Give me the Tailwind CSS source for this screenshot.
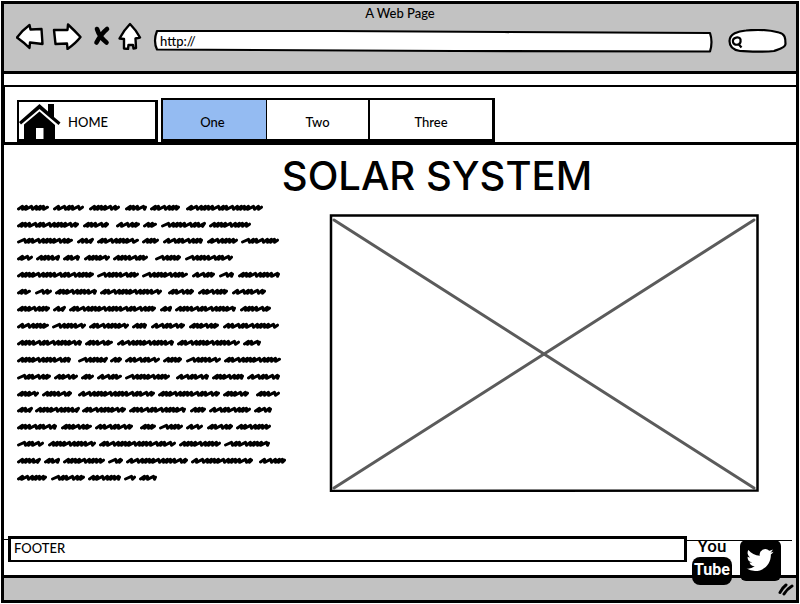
<!DOCTYPE html>
<html lang="en">
<head>
<meta charset="utf-8">
<title>A Web Page</title>
<script src="https://cdn.jsdelivr.net/npm/@tailwindcss/browser@4"></script>
</head>
<body class="bg-white font-['Lato',sans-serif] text-[13px] leading-4 font-medium text-black">
<div class="flex min-h-screen flex-col p-px">
  <div class="flex flex-1 flex-col border-3 border-black">

    <header class="border-b-3 border-black bg-[#c2c2c2] pb-[18px]">
      <p class="pt-px text-center">A Web Page</p>
      <div class="flex items-start pt-px pr-[9px] pl-3">
        <button type="button" aria-label="Back" class="shrink-0">
          <svg width="28" height="28" viewBox="0 0 28 28" fill="#fff" stroke="#000" stroke-width="2.400" stroke-linejoin="round"><path d="M1 15.500 Q6 8.500 13.500 3 L14.500 7.500 L25.500 7 L26.500 22 L14 20.500 L13.500 26 Q8 20.500 1 15.500Z"/></svg>
        </button>
        <button type="button" aria-label="Forward" class="ml-2 shrink-0">
          <svg width="30" height="28" viewBox="0 0 30 28" fill="#fff" stroke="#000" stroke-width="2.400" stroke-linejoin="round"><path d="M2 8 L15.500 8 L16 2.500 Q23 9 28.500 15 Q24 21 15.500 27 L15 21.500 L3.500 22Z"/></svg>
        </button>
        <button type="button" aria-label="Stop" class="ml-2 shrink-0">
          <svg width="22" height="28" viewBox="0 0 22 28" fill="none" stroke="#000" stroke-width="4.600" stroke-linecap="round"><path d="M7 7 Q9.500 15 16.500 20.500 M17 7 Q11 12 6.500 20.500"/></svg>
        </button>
        <button type="button" aria-label="Home" class="ml-[5px] shrink-0">
          <svg width="26" height="28" viewBox="0 0 26 28" fill="#fff" stroke="#000" stroke-width="2.400" stroke-linejoin="round"><path d="M13 2 Q19 8 23 15.500 L18.500 16.500 L19 26 L16.500 26.500 L16 23 L11.500 23 L11 27 L7 26.500 L7 17 L2.500 16.500 Q7 8 13 2Z"/></svg>
        </button>
        <div class="relative mt-[9px] ml-[11px] h-[22px] flex-1">
          <svg class="absolute inset-0 h-full w-full overflow-visible" viewBox="0 0 558 22" preserveAspectRatio="none" fill="#fff" stroke="#000" stroke-width="2.200" stroke-linejoin="round"><path d="M3 0 L180 0 L350 1 L556 2 Q559 11 556 20.500 L300 20 L3 18.500 Q-1 10 3 0Z"/></svg>
          <input type="text" aria-label="Address" value="http://" class="relative block h-5 w-full bg-transparent pl-1.5 outline-none">
        </div>
        <div class="relative mt-[7px] ml-4 h-[24px] w-[59px] shrink-0">
          <svg class="absolute inset-0" width="59" height="24" viewBox="0 0 59 24" fill="#fff" stroke="#000" stroke-width="2.200"><path d="M1.500 12 C1.500 5 10 2 18 1.500 C28 0.500 42 1 51 3.500 C57 5 57.500 9 57.500 15 C57.500 19 50 20.500 46 22 C36 23.500 22 22.500 12 22 C5 21 1.500 17 1.500 12Z"/><path fill="none" d="M5 13 C4 8 12 7 12.500 10.500 C13.500 17 5.500 17 5 13 M10 14.500 L13.500 18.500"/></svg>
          <input type="search" aria-label="Search" class="relative block h-full w-full bg-transparent pr-2 pl-5 outline-none">
        </div>
      </div>
    </header>

    <nav aria-label="Main" class="-mr-[3px] -ml-px mt-[11px] flex h-[60px] items-end border-2 border-b-3 border-black pl-[12px]">
      <a href="#" class="flex h-[42px] w-[141px] items-center border-2 border-r-3 border-b-3 border-black">
        <svg class="shrink-0" width="42" height="36" viewBox="0 0 42 36"><path d="M0 19 L20.500 1 L29 8.500 V1 H35 V14 L41.500 19.500 L39.500 22 L20.500 6 L2 21.500Z"/><path d="M5 21.500 L20.500 8.500 L36 22 V36 H24.500 V25 H17 V36 H5Z"/></svg>
        <span class="ml-[7px] pt-0.5">HOME</span>
      </a>
      <div class="ml-[3px] flex h-[44px] border-2 border-r-3 border-b-3 border-black">
        <a href="#one" aria-current="page" class="flex w-[104px] items-center justify-center border-r border-black bg-[#94bbf2] pt-1 pr-1">One</a>
        <a href="#two" class="flex w-[103px] items-center justify-center border-r-2 border-black pt-1">Two</a>
        <a href="#three" class="flex w-[122px] items-center justify-center pt-1">Three</a>
      </div>
    </nav>

    <main class="flex-1 pl-3">
      <h1 class="pt-[7px] pl-[62px] text-center font-['Inter',sans-serif] text-[40px] leading-12 font-medium">SOLAR SYSTEM</h1>
      <div class="flex items-start">
        <svg id="copy" class="shrink-0" role="img" aria-label="Placeholder paragraph" width="274" height="290" viewBox="16 200 274 290" fill="none" stroke="#000" stroke-width="3" stroke-linecap="round" stroke-linejoin="round"></svg>
        <svg class="mt-[14px] mr-[37px] ml-[39px] h-[278px] min-w-0 flex-1" role="img" aria-label="Image placeholder" viewBox="0 0 430 278" preserveAspectRatio="none" fill="none"><path d="M5 6 L425 274 M425 6 L5 274" stroke="#5b5b5b" stroke-width="3" stroke-linecap="round"/><path d="M2 1.500 L428.500 1.500 V276.500 L2 277Z" stroke="#000" stroke-width="2.500"/></svg>
      </div>
    </main>

    <footer>
      <div class="flex h-[39px] items-start">
        <div class="mt-[3px] w-1 border-t border-black"></div>
        <p class="h-[26px] flex-1 border-3 border-b-2 border-black bg-white pt-px pl-[3px]">FOOTER</p>
        <div class="relative mr-1 flex w-[105px] shrink-0 items-start">
          <div class="absolute top-1 left-0 w-full border-t border-black"></div>
          <a href="#youtube" aria-label="YouTube" class="relative ml-[5px] flex w-[40px] flex-col items-center font-['Roboto',sans-serif]">
            <span class="h-[21px] text-[17px] leading-[21px] font-medium">You</span>
            <span class="h-7 w-full rounded-lg bg-black text-center text-[16px] leading-[26px] font-bold text-white">Tube</span>
            <span class="absolute top-[39px] left-0 h-0.5 w-full bg-black"></span>
          </a>
          <a href="#twitter" aria-label="Twitter" class="relative mt-1 ml-[8px]">
            <svg width="41" height="41" viewBox="0 0 41 41"><rect width="41" height="41" rx="6"/><path fill="#fff" transform="translate(6.500 6.500) scale(1.130)" d="M23.950 4.570a10 10 0 0 1-2.820.770 4.960 4.960 0 0 0 2.160-2.720c-.950.550-2 .950-3.130 1.180a4.920 4.920 0 0 0-8.380 4.480C7.690 8.100 4.070 6.130 1.640 3.160a4.920 4.920 0 0 0 1.520 6.570 4.900 4.900 0 0 1-2.230-.610v.060a4.920 4.920 0 0 0 3.950 4.830 5 5 0 0 1-2.210.080 4.940 4.940 0 0 0 4.600 3.420A9.870 9.870 0 0 1 0 19.540a13.990 13.990 0 0 0 7.550 2.210c9.050 0 14-7.500 14-13.980l-.020-.640a9.940 9.940 0 0 0 2.420-2.560Z"/></svg>
          </a>
        </div>
      </div>
      <div class="flex h-[25px] items-center justify-end border-t-3 border-black bg-[#c2c2c2] pr-0.5">
        <svg width="16" height="14" viewBox="0 0 16 14" fill="none" stroke="#000" stroke-width="3" stroke-linecap="round"><path d="M2 10.500 Q4 6 8 3 M6 12 Q9 7 14 4"/></svg>
      </div>
    </footer>
  </div>
</div>

<script>
// Each row: baseline, then start and end of every scribbled word.
const rows = [
  [208, 17,49, 53,84, 89,120, 125,147, 150,180, 186,263],
  [225, 17,79, 83,109, 116,140, 143,157, 161,205, 209,251],
  [241, 17,73, 77,93, 97,139, 142,159, 163,203, 207,238, 241,279],
  [258, 17,33, 36,60, 63,80, 84,110, 113,148, 155,181, 185,233],
  [275, 17,94, 97,139, 142,188, 192,215, 219,234, 238,280],
  [292, 17,31, 35,52, 55,97, 100,162, 168,194, 198,228, 232,266],
  [309, 17,50, 53,65, 69,156, 160,172, 175,236, 240,271],
  [326, 17,49, 52,86, 89,129, 132,147, 151,185, 189,219, 223,279],
  [343, 17,82, 85,113, 117,174, 177,240, 243,261],
  [360, 17,71, 78,107, 110,122, 125,160, 163,182, 186,221, 224,281],
  [377, 17,51, 54,78, 81,94, 97,122, 125,170, 176,209, 212,244, 247,280],
  [394, 17,39, 42,72, 78,155, 158,220, 223,249, 256,280],
  [410, 17,32, 35,79, 82,126, 129,186, 190,206, 209,251, 254,272],
  [427, 17,57, 61,92, 95,133, 140,156, 159,183, 186,203, 207,233, 236,271],
  [444, 17,44, 48,96, 99,176, 179,221, 224,270],
  [461, 17,40, 44,60, 63,105, 108,123, 126,188, 191,253, 259,286],
  [478, 17,47, 51,85, 88,121, 124,136, 139,157]
];
const steps = [4, 3, 7, 4, 3, 4, 4, 7, 3, 4, 7, 4, 3];
let d = '', n = 0;
for (const [y, ...spans] of rows) {
  for (let i = 0; i < spans.length; i += 2) {
    let x = spans[i] + 1.5;
    const end = spans[i + 1] - 1.5;
    d += `M${x} ${y + 1}`;
    while (x + 5 <= end) {
      const step = steps[n++ % steps.length];
      d += `L${x + Math.max(4, step - 1)} ${y - 1.7}L${Math.min(x + step, end - 1)} ${y + 1.3}`;
      x += step;
    }
    d += `L${end} ${y - 0.8}`;
  }
}
const path = document.createElementNS('http://www.w3.org/2000/svg', 'path');
path.setAttribute('d', d);
document.getElementById('copy').append(path);
</script>
</body>
</html>
